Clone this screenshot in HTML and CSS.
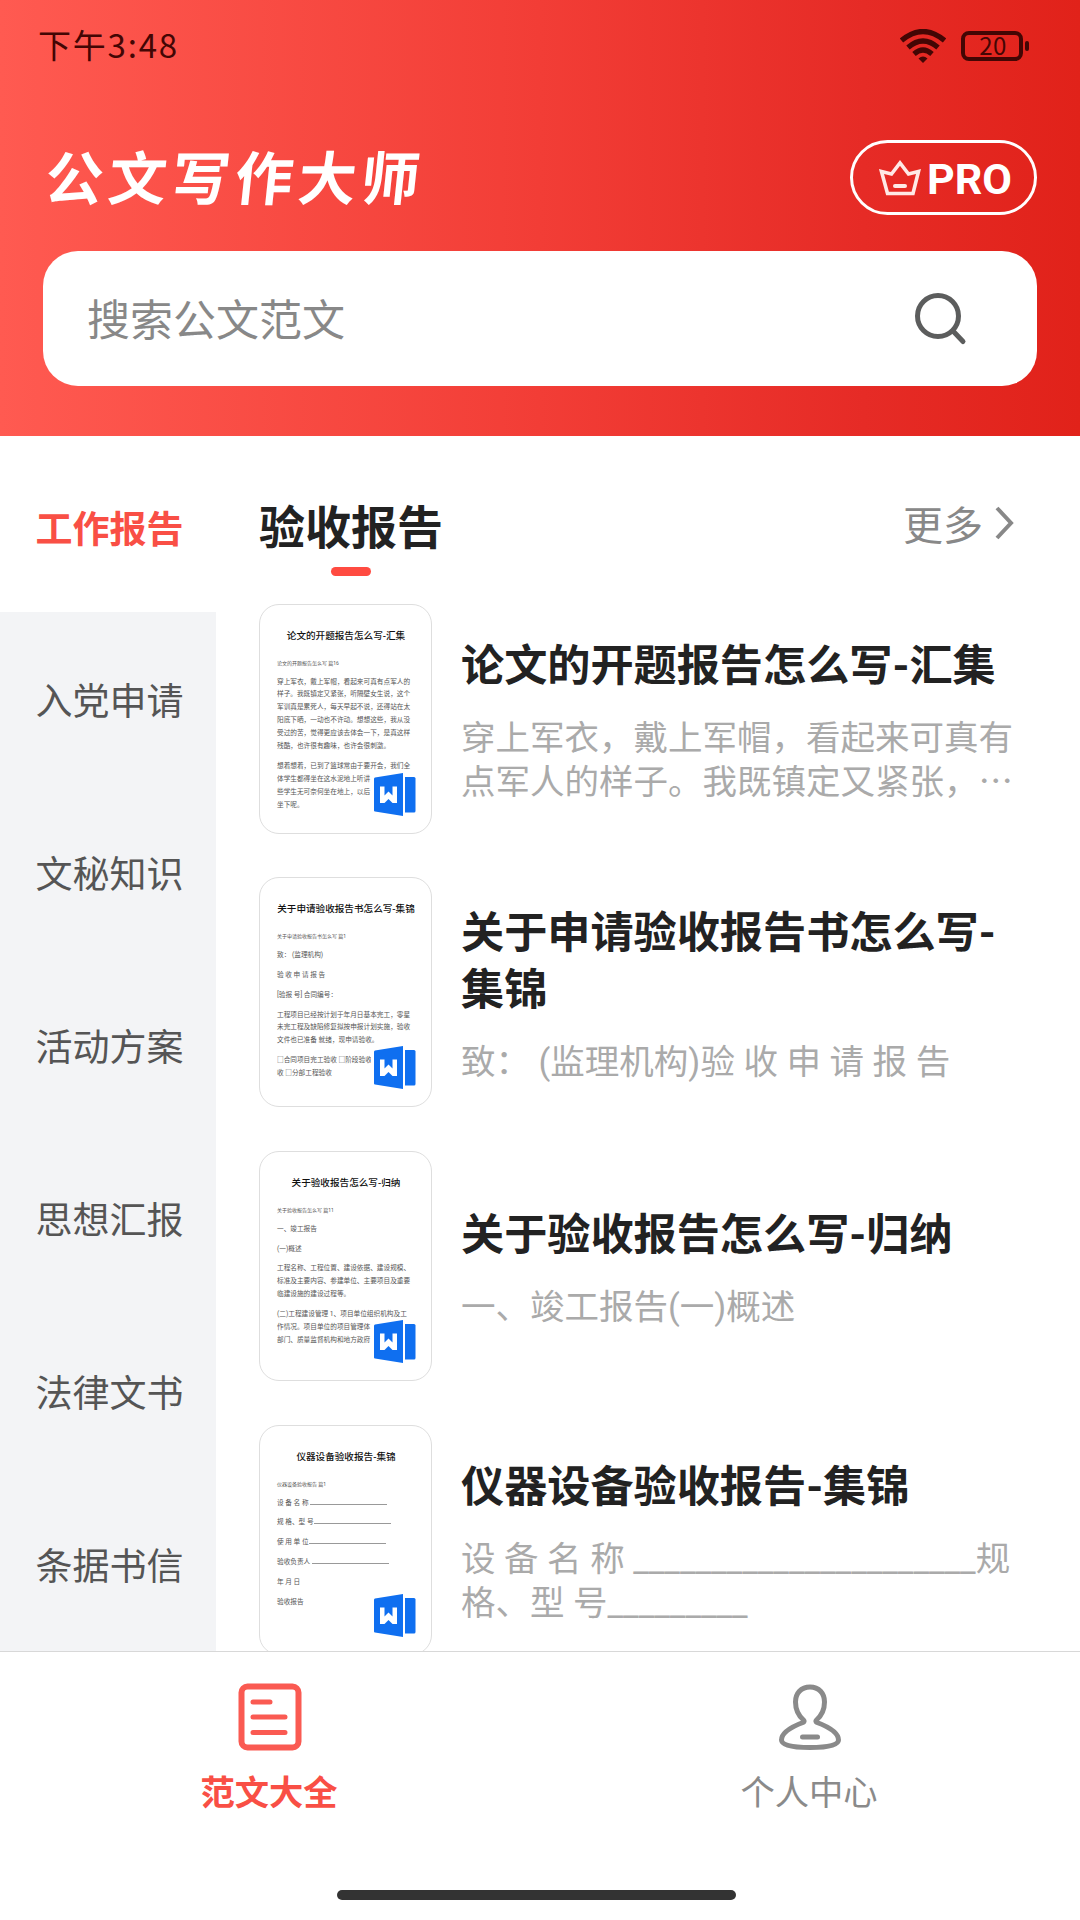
FILE: index.html
```html
<!DOCTYPE html>
<html lang="zh-CN">
<head>
<meta charset="utf-8">
<title>公文写作大师</title>
<link rel="stylesheet" href="styles.css">
</head>
<body>
<svg width="0" height="0" class="defs">
  <symbol id="word" viewBox="0 0 42 43">
    <path d="M0 5.5Q0 4.6 1 4.4L29 0V43L1 38.6Q0 38.4 0 37.4Z" fill="#0f6ff0"/>
    <path d="M31 4H40Q41.5 4 41.5 5.500V38Q41.500 39.500 40 39.500H31Z" fill="#0f6ff0"/>
    <path d="M6 13.500H10.500V22.500L14.500 18.500L18.500 22.500V13.500H23V30H18.500L14.500 26L10.500 30H6Z" fill="#fff"/>
  </symbol>
</svg>
<div class="app">
  <header class="header">
    <div class="status">
      <span class="time">下午3:48</span>
      <span class="status-icons">
        <svg class="wifi" viewBox="0 0 46 34" fill="none" stroke="#430604" stroke-width="5.200">
          <path d="M1.500 11.500Q23 -6.500 44.500 11.500M8 18.500Q23 5.500 38 18.500M14 25Q23 17 32 25"/>
          <path d="M18.500 29.500Q23 25.500 27.500 29.500L23 34Z" fill="#430604" stroke="none"/>
        </svg>
        <span class="battery">20</span>
      </span>
    </div>
    <div class="brand">
      <h1 class="logo">公文写作大师</h1>
      <div class="pro">
        <svg class="crown" viewBox="0 0 42 38" fill="none" stroke="#ffe9e6" stroke-width="3.600">
          <path d="M2.500 12.500L12.500 15L21 4L29.500 15L39.500 12.500L34 34.500H8.500Z"/>
          <path d="M16 27H26" stroke-width="4" stroke-linecap="round"/>
        </svg>
        <span>PRO</span>
      </div>
    </div>
    <div class="search">
      <span>搜索公文范文</span>
      <svg class="glass" viewBox="0 0 54 54" fill="none" stroke="#5c5d5d" stroke-width="5" stroke-linecap="round">
        <circle cx="25" cy="24" r="20.500"/><path d="M40 39L50 49.500"/>
      </svg>
    </div>
  </header>

  <main class="body">
    <nav class="side">
      <a class="cat active">工作报告</a>
      <a class="cat">入党申请</a>
      <a class="cat">文秘知识</a>
      <a class="cat">活动方案</a>
      <a class="cat">思想汇报</a>
      <a class="cat">法律文书</a>
      <a class="cat">条据书信</a>
    </nav>
    <section class="content">
      <div class="section-head">
        <h2>验收报告</h2>
        <span class="more">更多<svg viewBox="0 0 20 34" fill="none" stroke="#888" stroke-width="4"><path d="M3 2L17 17L3 32"/></svg></span>
      </div>
      <div class="list">
        <article class="row">
          <div class="thumb">
            <h4>论文的开题报告怎么写-汇集</h4>
            <small>论文的开题报告怎么写 篇16</small>
            <p>穿上军衣，戴上军帽，看起来可真有点军人的<br>样子。我既镇定又紧张，听隔壁女生说，这个<br>军训真是累死人，每天早起不说，还得站在太<br>阳底下晒，一动也不许动。想想这些，我从没<br>受过的苦，觉得更应该去体会一下，是真这样<br>残酷，也许很有趣味，也许会很刺激。</p>
            <p>想着想着，已到了篮球常由于要开会，我们全<br>体学生都得坐在这水泥地上听讲<br>些学生无可奈何坐在地上，以后<br>坐下呢。</p>
            <svg class="word"><use href="#word"/></svg>
          </div>
          <div class="info">
            <h3>论文的开题报告怎么写-汇集</h3>
            <div class="desc">穿上军衣，戴上军帽，看起来可真有<br>点军人的样子。我既镇定又紧张，<span class="cjk">…</span></div>
          </div>
        </article>
        <article class="row">
          <div class="thumb">
            <h4>关于申请验收报告书怎么写-集锦</h4>
            <small>关于申请验收报告书怎么写 篇1</small>
            <p>致： (监理机构)</p>
            <p>验 收 申 请 报 告</p>
            <p>[验报 号] 合同编号：</p>
            <p>工程项目已经按计划于年月日基本完工，零星<br>未完工程及缺陷修复拟按申报计划实施，验收<br>文件也已准备 就绪，现申请验收。</p>
            <p>□合同项目完工验收 □阶段验收<br>收 □分部工程验收</p>
            <svg class="word"><use href="#word"/></svg>
          </div>
          <div class="info">
            <h3>关于申请验收报告书怎么写-<br>集锦</h3>
            <div class="desc">致： (监理机构)验 收 申 请 报 告</div>
          </div>
        </article>
        <article class="row">
          <div class="thumb">
            <h4>关于验收报告怎么写-归纳</h4>
            <small>关于验收报告怎么写 篇11</small>
            <p>一、竣工报告</p>
            <p>(一)概述</p>
            <p>工程名称、工程位置、建设依据、建设规模、<br>标准及主要内容、参建单位、主要项目及重要<br>临建设施的建设过程等。</p>
            <p>(二)工程建设管理 1、项目单位组织机构及工<br>作情况。项目单位的项目管理体<br>部门、质量监督机构和地方政府</p>
            <svg class="word"><use href="#word"/></svg>
          </div>
          <div class="info">
            <h3>关于验收报告怎么写-归纳</h3>
            <div class="desc">一、竣工报告(一)概述</div>
          </div>
        </article>
        <article class="row">
          <div class="thumb">
            <h4>仪器设备验收报告-集锦</h4>
            <small>仪器设备验收报告 篇1</small>
            <p>设 备 名 称 <i class="blank"></i></p>
            <p>规 格、型 号<i class="blank"></i></p>
            <p>使 用 单 位<i class="blank"></i></p>
            <p>验收负责人 <i class="blank"></i></p>
            <p>年 月 日</p>
            <p>验收报告</p>
            <svg class="word"><use href="#word"/></svg>
          </div>
          <div class="info">
            <h3>仪器设备验收报告-集锦</h3>
            <div class="desc">设 备 名 称 ______________________规<br>格、型 号_________</div>
          </div>
        </article>
      </div>
    </section>
  </main>

  <footer class="footer">
    <div class="tabs">
      <a class="tab on">
        <svg viewBox="0 0 64 68" fill="none" stroke="#fa5a52" stroke-width="6" stroke-linecap="round">
          <rect x="3.500" y="3.500" width="57" height="61" rx="6"/>
          <path d="M15 19H32M15 34H47M15 49.500H47" stroke-width="5"/>
        </svg>
        <span>范文大全</span>
      </a>
      <a class="tab">
        <svg viewBox="0 0 64 68" fill="none" stroke="#8a8a8a" stroke-width="5" stroke-linecap="round">
          <path d="M32 4C23 4 17.500 10.500 17.500 19C17.500 27 21 33 25.500 37Q27 38.500 25 39.500C13 44 3.500 50 3.500 57Q3.500 64.500 32 64.500Q60.500 64.500 60.500 57C60.500 50 51 44 39 39.500Q37 38.500 38.500 37C43 33 46.500 27 46.500 19C46.500 10.500 41 4 32 4Z"/>
          <path d="M24.500 54H39.500"/>
        </svg>
        <span>个人中心</span>
      </a>
    </div>
    <div class="home"></div>
  </footer>
</div>
</body>
</html>
```
FILE: styles.css
```css
* { box-sizing: border-box; }
body, h1, h2, h3, h4, p { margin: 0; }
body {
  background: #fff;
  font-family: Roboto, "Noto Sans CJK SC", sans-serif;
}
.defs { position: absolute; }
.app {
  width: 1080px;
  height: 1920px;
  display: flex;
  flex-direction: column;
  overflow: hidden;
}

/* Header */
.header {
  flex: none;
  height: 435.500px;
  padding: 0 43px;
  background: linear-gradient(90deg, #ff5a51 0%, #f23d36 50%, #e62b26 80%, #e1221a 100%);
}
.status {
  height: 91px;
  padding: 0 15px 0 0;
  margin-left: -5px;
  display: flex;
  justify-content: space-between;
  align-items: center;
  color: #430604;
}
.time {
  font: 33px/40px "Noto Sans CJK SC", sans-serif;
  letter-spacing: 1.800px;
  margin-top: -3px;
}
.status-icons { display: flex; align-items: center; gap: 15px; }
.wifi { width: 46px; height: 34px; }
.battery {
  position: relative;
  width: 62px;
  height: 30px;
  border: 4px solid #430604;
  border-radius: 8px;
  font: 24px/20px "Noto Sans CJK SC", sans-serif;
  letter-spacing: 0.5px;
  text-align: center;
  padding-left: 2px;
  margin-right: -1px;
}
.battery::after {
  content: "";
  position: absolute;
  right: -10px;
  top: 6px;
  width: 4px;
  height: 10px;
  border-radius: 2px;
  background: #430604;
}
.brand {
  height: 160px;
  padding-top: 49px;
  display: flex;
  justify-content: space-between;
  align-items: flex-start;
}
.logo {
  font: 700 58px/76px "Noto Sans CJK SC", sans-serif;
  letter-spacing: 5.200px;
  color: #fff;
  transform: skewX(-6deg);
  margin: -3px 0 0 3px;
}
.pro {
  width: 187px;
  height: 75px;
  border: 3px solid #fff;
  border-radius: 38px;
  display: flex;
  align-items: center;
  padding-left: 26px;
  gap: 6px;
  color: #fff;
  font-size: 43px;
  font-weight: 700;
}
.pro span { padding-top: 3px; }
.crown { width: 42px; height: 38px; }
.search {
  height: 135px;
  border-radius: 35px;
  background: #fff;
  display: flex;
  justify-content: space-between;
  align-items: center;
  padding: 0 70px 0 44px;
  color: #888;
  font-size: 43px;
}
.search span { margin-top: -3px; }
.glass { width: 54px; height: 54px; }

/* Categories */
.body {
  flex: none;
  height: 1215.500px;
  display: flex;
  overflow: hidden;
}
.side {
  width: 216px;
  background: #f3f4f6;
  color: #555;
}
.cat {
  height: 173px;
  display: flex;
  align-items: center;
  justify-content: center;
  padding-left: 3px;
  font-size: 37px;
}
.cat.active {
  height: 176.500px;
  padding-top: 6px;
  background: #fff;
  color: #f94f45;
  font-weight: 700;
}

/* Document list */
.content {
  width: 864px;
  padding-left: 43px;
}
.section-head {
  height: 168.500px;
  padding: 60px 66px 0 0;
  display: flex;
  justify-content: space-between;
  align-items: flex-start;
}
h2 {
  position: relative;
  font-size: 46px;
  line-height: 64px;
  color: #222;
}
h2::after {
  content: "";
  position: absolute;
  left: 72px;
  top: 71.500px;
  width: 40px;
  height: 9px;
  border-radius: 5px;
  background: #ff4b41;
}
.more {
  display: flex;
  align-items: center;
  gap: 11px;
  font-size: 40px;
  line-height: 61px;
  color: #888;
}
.more svg { width: 20px; height: 34px; margin-top: -6px; }
.list { display: grid; gap: 44.700px; }
.row {
  height: 229px;
  display: flex;
  gap: 29px;
  align-items: center;
}
.thumb {
  position: relative;
  flex: none;
  width: 173px;
  height: 230px;
  border: 1px solid #dedede;
  border-radius: 20px;
  padding: 24px 0 0 17px;
  color: #555;
  font-size: 6.670px;
  line-height: 12.900px;
  white-space: nowrap;
  overflow: hidden;
}
.thumb h4 {
  font-size: 9.600px;
  font-weight: 500;
  line-height: 14px;
  color: #111;
  text-align: center;
  margin-left: -16px;
}
.thumb small {
  display: block;
  margin-top: 13px;
  font-size: 5px;
  line-height: 14px;
}
.thumb p { margin-top: 6.900px; }
.thumb small + p { margin-top: 6px; }
.blank {
  display: inline-block;
  width: 77px;
  border-bottom: 1px solid #999;
}
.word {
  position: absolute;
  left: 111px;
  top: 168px;
  width: 46px;
  height: 43px;
  padding: 0 1px 0 3px;
  background: #fff;
}
.info { flex: none; width: 560px; white-space: nowrap; padding-top: 4px; }
h3 {
  font-size: 43.150px;
  line-height: 57px;
  color: #222;
}
.desc {
  margin-top: 21px;
  font-size: 34.500px;
  line-height: 44px;
  color: #aaa;
}
.cjk {
  font-family: "Noto Sans CJK SC", sans-serif;
  line-height: 1;
}

/* Bottom bar */
.footer {
  flex: 1;
  border-top: 1px solid #d8d8d8;
  display: flex;
  flex-direction: column;
  justify-content: space-between;
  align-items: center;
  padding: 31px 0 20px;
}
.tabs { display: flex; width: 1080px; }
.tab {
  flex: 1;
  display: flex;
  flex-direction: column;
  align-items: center;
  gap: 18px;
  font-size: 34.300px;
  line-height: 48px;
  color: #8a8a8a;
}
.tab svg { width: 64px; height: 68px; }
.tab span { margin-left: -2px; }
.tab.on { color: #f94f45; font-weight: 700; }
.home {
  width: 399px;
  height: 10px;
  margin-right: 7px;
  border-radius: 5px;
  background: #333;
}
```
